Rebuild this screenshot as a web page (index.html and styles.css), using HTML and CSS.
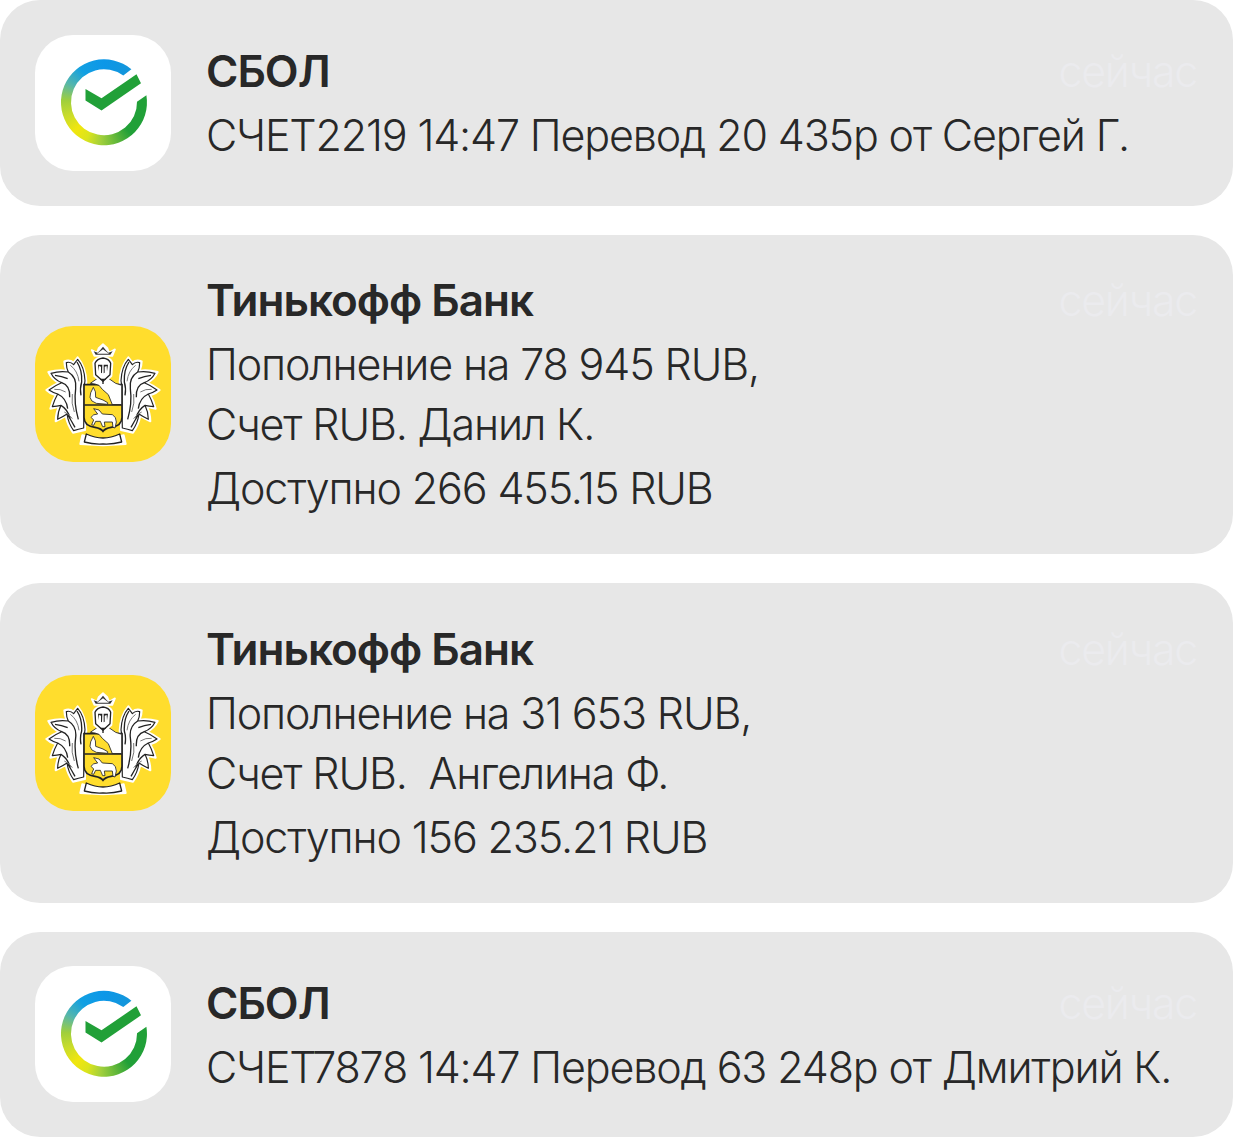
FILE: index.html
```html
<!DOCTYPE html>
<html lang="ru">
<head>
<meta charset="utf-8">
<title>Уведомления</title>
<link rel="stylesheet" href="styles.css">
</head>
<body>
<svg class="defs" width="0" height="0" aria-hidden="true">
  <symbol id="crest" viewBox="30 18 408 408">
    <g id="half">
      <path class="halo" d="M184 186 Q182 140 158 112 Q150 122 146 128 Q134 118 118 124 Q118 140 124 152 Q100 148 70 156 Q80 178 102 188 Q84 196 64 210 Q76 222 92 226 Q82 242 76 266 Q90 264 102 260 Q92 280 92 304 Q110 296 122 288 Q128 316 144 338 Q162 334 180 330 L182 196 Z"/>
      <path class="mantle" d="M180 182 Q178 140 158 118 Q150 128 146 134 Q136 124 124 128 Q124 144 130 156 Q104 152 78 160 Q88 180 110 188 Q90 196 72 210 Q84 218 98 222 Q88 240 82 260 Q96 258 108 256 Q98 276 98 298 Q114 290 126 282 Q130 310 146 332 Q160 328 176 324 L178 196 Z"/>
      <path class="line" d="M156 126 Q172 150 170 186 Q164 205 168 226 M130 156 Q156 172 152 206 Q146 250 160 298 M110 188 Q136 196 134 232 M98 222 Q124 234 128 266 M108 256 Q128 268 136 296 M90 166 Q110 168 128 176 M126 282 Q138 300 150 322"/>
      <path class="line-thin" d="M136 136 Q158 152 162 184 M88 208 Q106 206 122 216 M118 276 Q132 282 142 296 M142 222 Q138 250 148 276"/>
    </g>
    <use href="#half" transform="matrix(-1 0 0 1 468 0)"/>
    <path class="halo" d="M172 346 L234 360 L296 346 L302 372 L234 376 L166 372 Z"/>
    <path class="ribbon" d="M184 342 Q210 354 234 354 Q258 354 284 342 L290 366 Q260 374 234 372 Q206 374 178 366 Z"/>
    <path class="shield" d="M177 194 H291 V292 Q291 318 258 322 Q240 325 234 334 Q228 325 210 322 Q177 318 177 292 Z"/>
    <path class="white-fill" d="M196 190 L222 172 H246 L272 190 L290 196 V254 H262 L250 224 L232 208 L222 196 L210 192 Z"/>
    <path class="line" d="M178 255 H290"/>
    <path class="white-fill" d="M205 202 Q214 214 212 232 L234 240 L248 248 V253 L214 250 Q196 244 195 232 Q194 220 205 202 Z"/>
    <path class="white-fill" d="M198 292 Q204 282 218 282 L206 266 L222 270 L232 282 L262 284 Q274 290 274 306 L270 324 L264 322 L262 306 L238 306 L240 320 L233 320 L226 304 L212 304 L206 316 L200 314 L206 300 Z"/>
    <path class="halo" d="M208 168 L205 128 Q212 112 234 110 Q256 112 262 128 L259 168 L234 190 Z"/>
    <path class="helm" d="M212 164 L210 130 Q216 116 234 114 Q252 116 257 130 L255 164 L234 184 Z"/>
    <path class="visor" d="M219 134 H232 L231 160 L228 158 L228 140 L222 138 L221 154 Z M236 134 H249 L246 154 L245 138 L239 140 L239 158 L236 160 Z"/>
    <path class="line" d="M226 178 H242 M234 178 V192"/>
    <path class="crown" d="M200 90 L216 98 L221 84 L234 72 L247 84 L252 98 L270 88 L262 108 H208 Z"/>
    <path class="crown-in" d="M212 104 L206 94 L218 98 L224 92 L234 80 L244 92 L250 98 L263 94 L256 104 Z M216 101 H252 L246 97 L240 92 L234 88 L228 92 L222 97 Z"/>
  </symbol>
</svg>

<main class="list">
  <article class="card card-short">
    <div class="app app-white">
      <div class="sber">
        <div class="sber-ring"></div>
        <svg class="sber-check" viewBox="0 0 90 90" aria-hidden="true"><path d="M26.5 32 L42.5 41.3 L77.5 17.3 L82 26.3 L42.5 53.6 L26.5 43.6 Z"/></svg>
      </div>
    </div>
    <div class="body">
      <div class="head"><h2 class="title">СБОЛ</h2><span class="time">сейчас</span></div>
      <p class="line-1">СЧЕТ2219 14:47 Перевод 20 435р от Сергей Г.</p>
    </div>
  </article>

  <article class="card card-tall">
    <div class="app app-yellow"><svg class="crest" aria-hidden="true"><use href="#crest"/></svg></div>
    <div class="body">
      <div class="head"><h2 class="title">Тинькофф Банк</h2><span class="time">сейчас</span></div>
      <p class="line-1">Пополнение на 78 945 RUB,</p>
      <p class="line-2">Счет RUB. Данил К.</p>
      <p class="line-3">Доступно 266 455.15 RUB</p>
    </div>
  </article>

  <article class="card card-tall">
    <div class="app app-yellow"><svg class="crest" aria-hidden="true"><use href="#crest"/></svg></div>
    <div class="body">
      <div class="head"><h2 class="title">Тинькофф Банк</h2><span class="time">сейчас</span></div>
      <p class="line-1">Пополнение на 31 653 RUB,</p>
      <p class="line-2">Счет RUB.&nbsp; Ангелина Ф.</p>
      <p class="line-3">Доступно 156 235.21 RUB</p>
    </div>
  </article>

  <article class="card card-short">
    <div class="app app-white">
      <div class="sber">
        <div class="sber-ring"></div>
        <svg class="sber-check" viewBox="0 0 90 90" aria-hidden="true"><path d="M26.5 32 L42.5 41.3 L77.5 17.3 L82 26.3 L42.5 53.6 L26.5 43.6 Z"/></svg>
      </div>
    </div>
    <div class="body">
      <div class="head"><h2 class="title">СБОЛ</h2><span class="time">сейчас</span></div>
      <p class="line-1">СЧЕТ7878 14:47 Перевод 63 248р от Дмитрий К.</p>
    </div>
  </article>
</main>
</body>
</html>
```

FILE: styles.css
```css
html, body {
  margin: 0;
  padding: 0;
  background: #fff;
}
.defs {
  position: absolute;
}
.list {
  display: flex;
  flex-direction: column;
  gap: 29px;
  font-family: Inter, "Liberation Sans", sans-serif;
  color: #282828;
}
.card {
  display: flex;
  align-items: center;
  gap: 35px;
  padding: 0 36px 0 35px;
  background: #e7e7e7;
  border-radius: 40px;
  box-sizing: border-box;
}
.card-short {
  height: 205.5px;
}
.card-short .body {
  padding-top: 0.5px;
}
.card-tall {
  height: 319.5px;
}
.app {
  flex: none;
  width: 136px;
  height: 136px;
  border-radius: 38px;
  display: flex;
  align-items: center;
  justify-content: center;
}
.app-white {
  background: #fff;
}
.app-yellow {
  background: #ffdd2d;
}
.body {
  flex: 1;
  min-width: 0;
}
.head {
  display: flex;
  justify-content: space-between;
  align-items: baseline;
}
.title {
  margin: 0;
  font-size: 44px;
  font-weight: 600;
  line-height: 60px;
  letter-spacing: -1px;
}
.time {
  font-size: 43px;
  font-weight: 300;
  line-height: 60px;
  letter-spacing: -1.3px;
  color: #ebebee;
}
.body p {
  margin: 0;
  font-size: 43px;
  font-weight: 300;
  line-height: 60px;
  letter-spacing: -1.15px;
  white-space: nowrap;
}
.body .line-1, .body .line-3 {
  margin-top: 4px;
}
.sber {
  position: relative;
  width: 90px;
  height: 90px;
  margin: -1px 0 0 2px;
}
.sber-ring {
  width: 90px;
  height: 90px;
  background: conic-gradient(#0c97e8 0deg, #1496da 40deg, #21a038 80deg, #21a038 140deg, #5cb53a 160deg, #a2d03c 185deg, #dbe41c 205deg, #f1e60e 225deg, #c8dc2c 250deg, #a0cf3c 272deg, #55b6ac 298deg, #12a0e2 325deg, #0c97e8 360deg);
  clip-path: path("M72.4 11.9 A43 43 0 1 0 87.4 38 L78 44.4 A33 33 0 1 1 64.3 18.2 Z");
}
.sber-check {
  position: absolute;
  inset: 0;
  width: 90px;
  height: 90px;
  fill: #21a038;
}
.crest {
  width: 136px;
  height: 136px;
}
.halo {
  fill: #fff;
  stroke: #fff;
  stroke-width: 6;
  stroke-linejoin: round;
}
.mantle {
  fill: #fff;
  stroke: #222;
  stroke-width: 3.5;
  stroke-linejoin: round;
}
.line {
  fill: none;
  stroke: #222;
  stroke-width: 4;
}
.line-thin {
  fill: none;
  stroke: #777;
  stroke-width: 3;
}
.ribbon {
  fill: #fff;
  stroke: #222;
  stroke-width: 4;
  stroke-linejoin: round;
}
.shield {
  fill: #ffdd2d;
  stroke: #222;
  stroke-width: 5;
}
.white-fill {
  fill: #fff;
  stroke: #222;
  stroke-width: 2.5;
  stroke-linejoin: round;
}
.helm {
  fill: #fff;
  stroke: #222;
  stroke-width: 4;
  stroke-linejoin: round;
}
.visor {
  fill: #222;
}
.crown {
  fill: #fff;
  stroke: #fff;
  stroke-width: 5;
  stroke-linejoin: round;
}
.crown-in {
  fill: #333;
}
```
